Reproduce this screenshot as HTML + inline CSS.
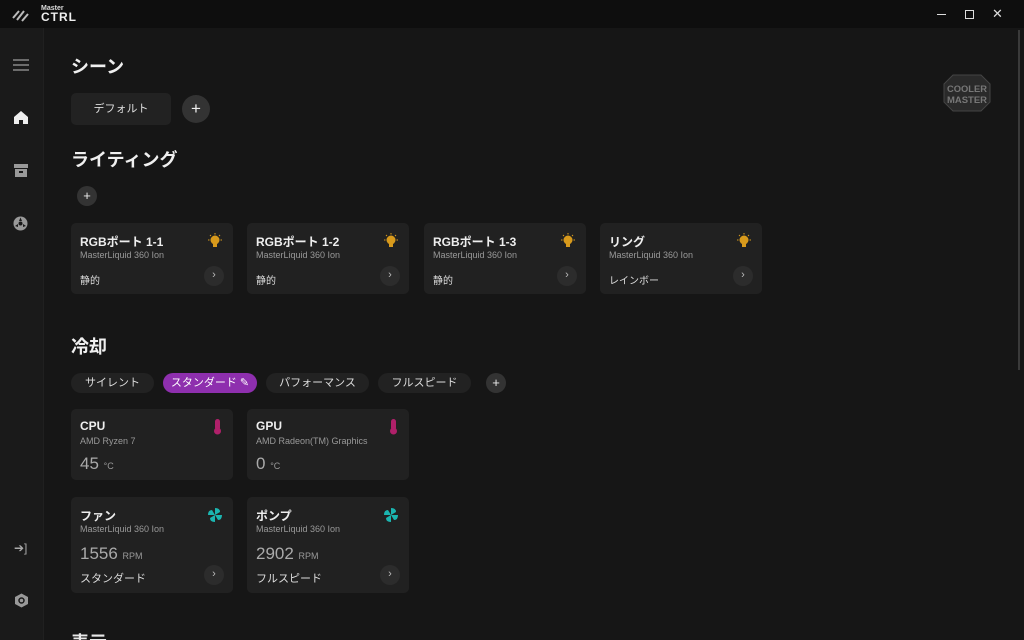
<!DOCTYPE html>
<html><head><meta charset="utf-8"><style>
*{margin:0;padding:0;box-sizing:border-box}
html,body{width:1024px;height:640px;overflow:hidden}
body{background:#161616;font-family:"Liberation Sans","Noto Sans CJK JP",sans-serif;color:#e8e8e8;position:relative}
.a{position:absolute}
.title{left:0;top:0;width:1024px;height:28px;background:#0e0e0e}
.side{left:0;top:28px;width:44px;height:612px;background:#1a1a1a;border-right:1px solid #202020}
h2{position:absolute;font-size:18px;font-weight:bold;color:#f0f0f0;line-height:22px}
.card{position:absolute;background:#212121;border-radius:5px;width:162px}
.card .t{position:absolute;left:9px;top:10px;font-size:12px;font-weight:bold;color:#eee}
.card .s{position:absolute;left:9px;top:27px;font-size:9px;color:#999}
.card .m{position:absolute;left:9px;top:49px;font-size:10px;color:#ddd}
.card .g{position:absolute;right:9px;bottom:8px;width:20px;height:20px;border-radius:50%;background:#2c2c2c;color:#bbb;font-size:11px;text-align:center;line-height:19px}
.card .ic{position:absolute;right:10px;top:10px}
.pill{position:absolute;top:373px;height:20px;border-radius:10px;background:#222;font-size:11px;color:#ddd;text-align:center;line-height:20px}
.plus{position:absolute;border-radius:50%;background:#333;color:#eee;text-align:center}
.v{position:absolute;left:9px;font-size:17px;color:#aaa}
.v small{font-size:9px;color:#999}
</style></head><body>
<div class="a title"></div>
<svg class="a" style="left:12px;top:8px" width="18" height="14" viewBox="0 0 18 14"><g stroke="#bbb" stroke-width="2"><line x1="1" y1="10" x2="7" y2="3"/><line x1="5" y1="12" x2="12" y2="3"/><line x1="10" y1="13" x2="16" y2="6"/></g></svg>
<div class="a" style="left:41px;top:5px;font-size:7px;color:#ddd;font-weight:bold">Master</div>
<div class="a" style="left:41px;top:10px;font-size:12px;color:#eee;font-weight:bold;letter-spacing:1px">CTRL</div>
<div class="a" style="left:937px;top:14px;width:9px;height:1px;background:#ddd"></div>
<div class="a" style="left:965px;top:10px;width:9px;height:9px;border:1.5px solid #ddd"></div>
<div class="a" style="left:992px;top:6px;font-size:13px;color:#ddd">✕</div>
<div class="a side"></div>
<div class="a" style="left:1018px;top:30px;width:2px;height:340px;background:#3a3a3a"></div>
<svg class="a" style="left:13px;top:58px" width="16" height="14"><g stroke="#999" stroke-width="1.3"><line x1="0" y1="2" x2="16" y2="2"/><line x1="0" y1="7" x2="16" y2="7"/><line x1="0" y1="12" x2="16" y2="12"/></g></svg>
<svg class="a" style="left:14px;top:111px" width="14" height="13"><path d="M7 0 L14 6 V13 H9 V9 H5 V13 H0 V6Z" fill="#eee"/></svg>
<svg class="a" style="left:14px;top:164px" width="14" height="13"><rect x="0" y="0" width="14" height="4" fill="#999"/><rect x="1" y="5" width="12" height="8" fill="#999"/><rect x="5" y="7" width="4" height="2" fill="#1a1a1a"/></svg>
<svg class="a" style="left:13px;top:216px" width="15" height="15"><circle cx="7.5" cy="7.5" r="7" fill="#999"/><circle cx="7.5" cy="7.5" r="2" fill="#1a1a1a"/><path d="M7.5 1.5 L9 5 L6 5Z M2 10 L5 8 L5 11Z M13 10 L10 8 L10 11Z" fill="#1a1a1a"/></svg>
<div class="a" style="left:14px;top:541px;font-size:12px;color:#aaa">➔]</div>
<svg class="a" style="left:14px;top:593px" width="15" height="15"><path d="M7.5 0.5 L14 4 V11 L7.5 14.5 L1 11 V4Z" fill="#999"/><circle cx="7.5" cy="7.5" r="2.5" fill="none" stroke="#1a1a1a" stroke-width="1.5"/></svg>

<h2 style="left:71px;top:56px">シーン</h2>
<div class="a" style="left:71px;top:93px;width:100px;height:32px;background:#222;border-radius:5px;font-size:11px;text-align:center;line-height:32px;color:#ddd">デフォルト</div>
<div class="plus" style="left:182px;top:95px;width:28px;height:28px;line-height:27px;font-size:17px">+</div>
<svg class="a" style="left:943px;top:74px" width="48" height="38" viewBox="0 0 48 38"><path d="M10 1 H38 L47 10 V28 L38 37 H10 L1 28 V10Z" fill="#2a2a2a" stroke="#444"/><text x="24" y="18" font-size="9" font-weight="bold" fill="#777" text-anchor="middle" font-family="Liberation Sans" textLength="40" lengthAdjust="spacingAndGlyphs">COOLER</text><text x="24" y="29" font-size="9" font-weight="bold" fill="#777" text-anchor="middle" font-family="Liberation Sans" textLength="40" lengthAdjust="spacingAndGlyphs">MASTER</text></svg>

<h2 style="left:71px;top:149px">ライティング</h2>
<div class="plus" style="left:77px;top:186px;width:20px;height:20px;line-height:19px;font-size:13px">+</div>

<svg width="0" height="0" style="position:absolute"><defs><g id="bulb"><circle cx="8" cy="7" r="4.5" fill="#d89a1c"/><rect x="6" y="11" width="4" height="3" fill="#d89a1c"/><g stroke="#d89a1c" stroke-width="1"><line x1="8" y1="0" x2="8" y2="1.5"/><line x1="1" y1="7" x2="2.5" y2="7"/><line x1="13.5" y1="7" x2="15" y2="7"/><line x1="3" y1="2" x2="4" y2="3"/><line x1="13" y1="2" x2="12" y2="3"/></g></g>
<g id="fan"><path d="M8 8 L8 1 Q13 1 13 5Z M8 8 L15 8 Q15 13 11 13Z M8 8 L8 15 Q3 15 3 11Z M8 8 L1 8 Q1 3 5 3Z" fill="#1bb5b0"/></g>
<g id="th"><rect x="5" y="0" width="5" height="11" rx="2.5" fill="#b0206a"/><circle cx="7.5" cy="12" r="3.5" fill="#b0206a"/></g></defs></svg>

<div class="card" style="left:71px;top:223px;height:71px"><div class="t">RGBポート 1-1</div><div class="s">MasterLiquid 360 Ion</div><div class="m">静的</div><div class="g">›</div><svg class="ic" width="16" height="15"><use href="#bulb"/></svg></div>
<div class="card" style="left:247px;top:223px;height:71px"><div class="t">RGBポート 1-2</div><div class="s">MasterLiquid 360 Ion</div><div class="m">静的</div><div class="g">›</div><svg class="ic" width="16" height="15"><use href="#bulb"/></svg></div>
<div class="card" style="left:424px;top:223px;height:71px"><div class="t">RGBポート 1-3</div><div class="s">MasterLiquid 360 Ion</div><div class="m">静的</div><div class="g">›</div><svg class="ic" width="16" height="15"><use href="#bulb"/></svg></div>
<div class="card" style="left:600px;top:223px;height:71px"><div class="t">リング</div><div class="s">MasterLiquid 360 Ion</div><div class="m">レインボー</div><div class="g">›</div><svg class="ic" width="16" height="15"><use href="#bulb"/></svg></div>

<h2 style="left:71px;top:336px">冷却</h2>
<div class="pill" style="left:71px;width:83px">サイレント</div>
<div class="pill" style="left:163px;width:94px;background:#8e2fae;color:#fff">スタンダード ✎</div>
<div class="pill" style="left:266px;width:103px">パフォーマンス</div>
<div class="pill" style="left:378px;width:93px">フルスピード</div>
<div class="plus" style="left:486px;top:373px;width:20px;height:20px;line-height:19px;font-size:13px">+</div>

<div class="card" style="left:71px;top:409px;height:71px"><div class="t">CPU</div><div class="s">AMD Ryzen 7</div><div class="v" style="top:45px">45 <small>°C</small></div><svg class="ic" width="15" height="16" style="right:8px"><use href="#th"/></svg></div>
<div class="card" style="left:247px;top:409px;height:71px"><div class="t">GPU</div><div class="s">AMD Radeon(TM) Graphics</div><div class="v" style="top:45px">0 <small>°C</small></div><svg class="ic" width="15" height="16" style="right:8px"><use href="#th"/></svg></div>
<div class="card" style="left:71px;top:497px;height:96px"><div class="t">ファン</div><div class="s">MasterLiquid 360 Ion</div><div class="v" style="top:47px">1556 <small>RPM</small></div><div class="m" style="top:73px;font-size:11px">スタンダード</div><div class="g">›</div><svg class="ic" width="16" height="16"><use href="#fan"/></svg></div>
<div class="card" style="left:247px;top:497px;height:96px"><div class="t">ポンプ</div><div class="s">MasterLiquid 360 Ion</div><div class="v" style="top:47px">2902 <small>RPM</small></div><div class="m" style="top:73px;font-size:11px">フルスピード</div><div class="g">›</div><svg class="ic" width="16" height="16"><use href="#fan"/></svg></div>
<div class="a" style="left:71px;top:630px;width:60px;height:10px;overflow:hidden"><div style="font-size:18px;font-weight:bold;line-height:22px;margin-top:2px">表示</div></div>
</body></html>
